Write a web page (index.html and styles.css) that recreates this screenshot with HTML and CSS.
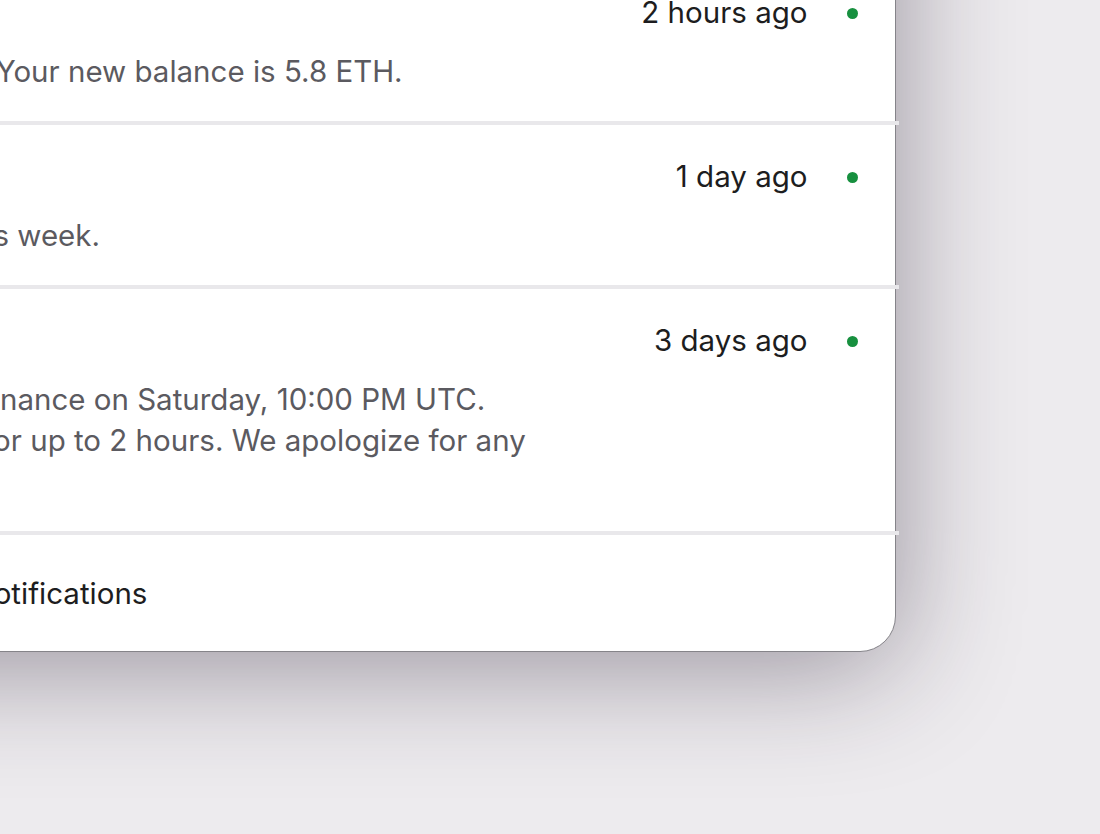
FILE: index.html
```html
<!DOCTYPE html>
<html lang="en">
<head>
<meta charset="utf-8">
<title>Notifications</title>
<link rel="stylesheet" href="styles.css">
</head>
<body>
<main class="stage">
  <section class="card">
    <header class="header">
      <h1 class="heading">Notifications</h1>
      <button class="mark">Mark all as read</button>
    </header>
    <div class="divider"></div>

    <article class="item">
      <div class="icon icon-green">
        <svg viewBox="0 0 24 24" width="30" height="30" fill="none" stroke="currentColor" stroke-width="2" stroke-linecap="round" stroke-linejoin="round"><path d="M12 5v14M5 12l7 7 7-7"/></svg>
      </div>
      <div class="content">
        <div class="title">Deposit received</div>
        <p class="text">Deposit of 1.2 ETH received. Your new balance is 5.8 ETH.</p>
      </div>
      <div class="meta">
        <span class="time">2 hours ago</span>
        <span class="dot"></span>
      </div>
    </article>
    <div class="divider"></div>

    <article class="item">
      <div class="icon icon-blue">
        <svg viewBox="0 0 24 24" width="30" height="30" fill="none" stroke="currentColor" stroke-width="2" stroke-linecap="round" stroke-linejoin="round"><path d="M3 17l6-6 4 4 8-8M15 7h6v6"/></svg>
      </div>
      <div class="content">
        <div class="title">Weekly summary</div>
        <p class="text">Your portfolio is up 12.4% this week.</p>
      </div>
      <div class="meta">
        <span class="time">1 day ago</span>
        <span class="dot"></span>
      </div>
    </article>
    <div class="divider"></div>

    <article class="item">
      <div class="icon icon-amber">
        <svg viewBox="0 0 24 24" width="30" height="30" fill="none" stroke="currentColor" stroke-width="2" stroke-linecap="round" stroke-linejoin="round"><path d="M12 3l10 18H2z M12 10v5 M12 18h.01"/></svg>
      </div>
      <div class="content">
        <div class="title">Scheduled maintenance</div>
        <p class="text">We will be performing maintenance on Saturday, 10:00 PM UTC.<br>Trading may be unavailable for up to 2 hours. We apologize for any<br>inconvenience.</p>
      </div>
      <div class="meta">
        <span class="time">3 days ago</span>
        <span class="dot"></span>
      </div>
    </article>
    <div class="divider"></div>

    <footer class="footer">
      <a class="all" href="#">View all notifications</a>
    </footer>
  </section>
</main>
</body>
</html>
```
FILE: styles.css
```css
html, body {
  margin: 0;
  height: 100%;
}

body {
  background: #edebee;
  overflow: hidden;
  font-family: Inter, "Liberation Sans", sans-serif;
  font-size: 29.5px;
  color: #1d1d20;
}

.stage {
  width: 1100px;
  height: 834px;
  overflow: hidden;
}

.card {
  box-sizing: border-box;
  width: 1456px;
  margin: -154.5px 0 0 -560px;
  background: #ffffff;
  border: 1.5px solid #858489;
  border-radius: 36px;
  box-shadow: 0 14px 120px rgba(40, 30, 50, 0.44);
}

.header {
  display: flex;
  align-items: center;
  justify-content: space-between;
  height: 110px;
  box-sizing: border-box;
  padding: 0 37px 0 48px;
}

.heading {
  margin: 0;
  font-size: 34px;
  font-weight: 600;
  line-height: 36px;
}

.mark {
  border: 0;
  background: none;
  font: inherit;
  color: #1d1d20;
  padding: 0;
}

.divider {
  height: 4px;
  background: #e9e8eb;
  margin-right: -4px;
}

.item {
  display: flex;
  align-items: flex-start;
  gap: 40px;
  padding: 33px 37px 29px 48px;
}

.icon {
  flex: none;
  width: 64px;
  height: 64px;
  border-radius: 50%;
  display: flex;
  align-items: center;
  justify-content: center;
}

.icon-green { background: #e3f4e8; color: #17903f; }
.icon-blue { background: #e4ecfb; color: #2f63d6; }
.icon-amber { background: #fbf0dc; color: #c07a0c; }

.content {
  flex: 1;
  min-width: 0;
}

.title {
  line-height: 36px;
  font-weight: 600;
}

.text {
  margin: 21px 0 0;
  line-height: 41px;
  color: #5b5a60;
  white-space: nowrap;
}

.meta {
  flex: none;
  display: flex;
  align-items: center;
  gap: 39.5px;
  height: 36px;
  line-height: 36px;
}

.time {
  color: #1d1d20;
}

.dot {
  width: 11px;
  height: 11px;
  border-radius: 50%;
  background: #17903f;
  margin-top: 4px;
}

.footer {
  padding: 40px 37px 40px 419.5px;
  line-height: 36px;
}

.all {
  color: #1d1d20;
  text-decoration: none;
}
```
